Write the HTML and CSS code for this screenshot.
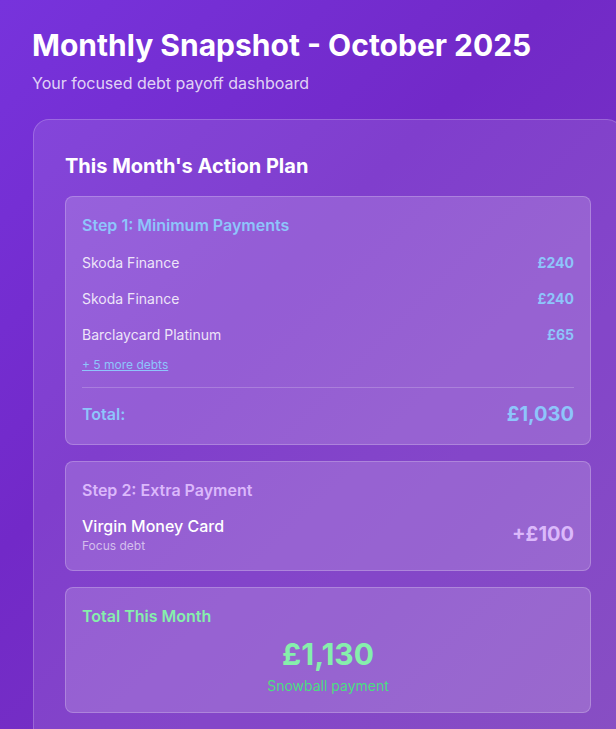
FILE: index.html
```html
<!DOCTYPE html>
<html lang="en">
<head>
    <meta charset="UTF-8">
    <meta name="viewport" content="width=device-width, initial-scale=1.0">
    <title>Monthly Snapshot</title>
    <link rel="stylesheet" href="styles.css">
</head>
<body>
    <div class="page">
        <header class="header">
            <h1>Monthly Snapshot - October 2025</h1>
            <p class="subtitle">Your focused debt payoff dashboard</p>
        </header>

        <section class="card">
            <h2>This Month's Action Plan</h2>

            <div class="step">
                <h3 class="step-title blue">Step 1: Minimum Payments</h3>
                <div class="row">
                    <span>Skoda Finance</span>
                    <span class="amount blue">£240</span>
                </div>
                <div class="row">
                    <span>Skoda Finance</span>
                    <span class="amount blue">£240</span>
                </div>
                <div class="row">
                    <span>Barclaycard Platinum</span>
                    <span class="amount blue">£65</span>
                </div>
                <a class="more" href="#">+ 5 more debts</a>
                <div class="total-row blue">
                    <span>Total:</span>
                    <span class="total-amount">£1,030</span>
                </div>
            </div>

            <div class="step">
                <h3 class="step-title purple">Step 2: Extra Payment</h3>
                <div class="focus">
                    <div>
                        <div class="focus-name">Virgin Money Card</div>
                        <div class="focus-note">Focus debt</div>
                    </div>
                    <span class="extra">+£100</span>
                </div>
            </div>

            <div class="step">
                <h3 class="step-title green">Total This Month</h3>
                <div class="grand">£1,130</div>
                <div class="grand-note">Snowball payment</div>
            </div>
        </section>
    </div>
</body>
</html>
```

FILE: styles.css
```css
html {
    overflow: hidden;
}

body {
    margin: 0;
    min-height: 100vh;
    font-family: Inter, "Noto Sans", sans-serif;
    color: #fff;
    background: linear-gradient(135deg, #7733dc 0%, #7229c8 40%, #7b3bbd 100%);
}

.page {
    padding: 27px 32px 0;
}

h1 {
    margin: 0;
    font-size: 30px;
    font-weight: 700;
    line-height: 1.2;
}

.subtitle {
    margin: 10px 0 0;
    font-size: 16px;
    color: rgba(255, 255, 255, 0.8);
}

.card {
    width: 526px;
    margin: 26px 0 0 1px;
    padding: 32px 31px;
    background: rgba(255, 255, 255, 0.1);
    border: 1px solid rgba(255, 255, 255, 0.2);
    border-radius: 16px;
}

h2 {
    margin: 0 0 16px;
    font-size: 20px;
    font-weight: 700;
    line-height: 28px;
}

.step {
    margin-bottom: 16px;
    padding: 16px;
    background: rgba(255, 255, 255, 0.16);
    border: 1px solid rgba(255, 255, 255, 0.22);
    border-radius: 8px;
}

.step-title {
    margin: 0 0 12px;
    font-size: 16px;
    font-weight: 600;
    line-height: 24px;
}

.blue {
    color: #8ec5fb;
}

.purple {
    color: #dbb8fb;
}

.green {
    color: #86efac;
}

.step-title.blue {
    margin-bottom: 7px;
}

.row {
    display: flex;
    justify-content: space-between;
    align-items: center;
    height: 36px;
    font-size: 14px;
    color: rgba(255, 255, 255, 0.85);
}

.amount {
    font-weight: 700;
}

.more {
    display: inline-block;
    margin-top: 5px;
    font-size: 12px;
    color: #8ec5fb;
}

.total-row {
    display: flex;
    justify-content: space-between;
    align-items: center;
    margin-top: 14px;
    padding-top: 12px;
    border-top: 1px solid rgba(255, 255, 255, 0.2);
    font-size: 16px;
    font-weight: 600;
    line-height: 28px;
}

.total-amount {
    font-size: 20px;
    font-weight: 700;
}

.focus {
    display: flex;
    justify-content: space-between;
    align-items: center;
}

.focus-name {
    font-size: 16px;
    font-weight: 500;
    line-height: 24px;
}

.focus-note {
    font-size: 12px;
    line-height: 16px;
    color: rgba(255, 255, 255, 0.6);
}

.extra {
    font-size: 20px;
    font-weight: 700;
    color: #dbb8fb;
}

.step-title.green {
    margin-bottom: 8px;
}

.grand {
    text-align: center;
    font-size: 30px;
    font-weight: 700;
    line-height: 36px;
    color: #86efac;
}

.grand-note {
    margin-top: 4px;
    text-align: center;
    font-size: 14px;
    line-height: 20px;
    color: #4ade80;
}
```
